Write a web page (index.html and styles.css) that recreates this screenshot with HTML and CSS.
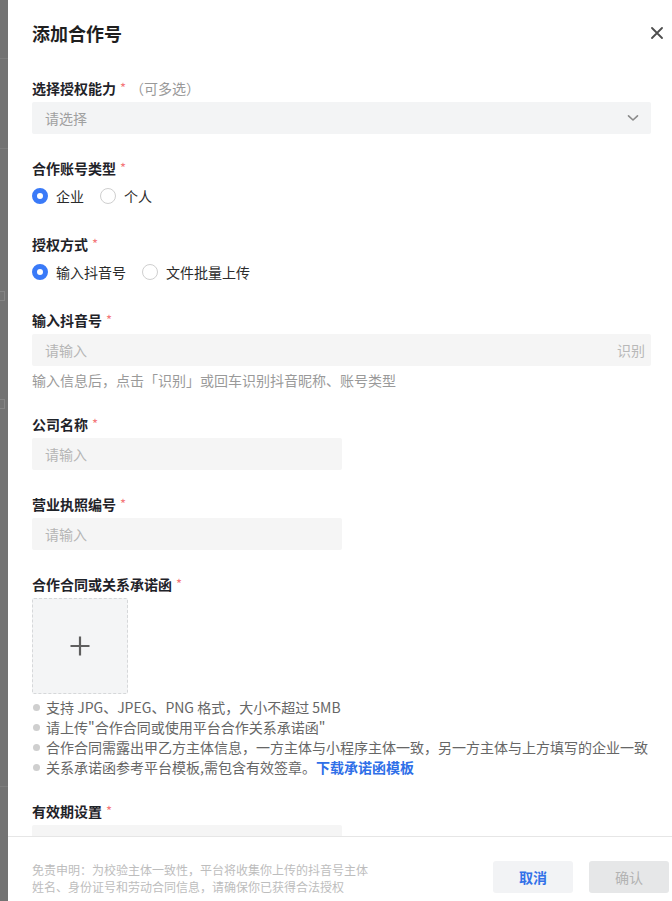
FILE: index.html
```html
<!DOCTYPE html>
<html lang="zh">
<head>
<meta charset="utf-8">
<title>添加合作号</title>
<link rel="stylesheet" href="styles.css">
</head>
<body>
<div class="page">
  <div class="backdrop">
    <span class="bd-line l1"></span>
    <span class="bd-line l2"></span>
    <span class="bd-mark m1"></span>
    <span class="bd-mark m2"></span>
    <span class="bd-line l3"></span>
  </div>
  <div class="drawer">
    <div class="body">
      <div class="header">
        <h1 class="title">添加合作号</h1>
        <svg class="close" width="12" height="12" viewBox="0 0 12 12"><path d="M1 1L11 11M11 1L1 11" stroke="#4e4e4e" stroke-width="1.8" stroke-linecap="round"/></svg>
      </div>

      <div class="item">
        <div class="label">选择授权能力<span class="req">*</span><span class="hint">（可多选）</span></div>
        <div class="field select">
          <span class="ph">请选择</span>
          <svg class="chev" width="12" height="8" viewBox="0 0 12 8"><path d="M1.5 1.8L6 6L10.5 1.8" fill="none" stroke="#8a8a8a" stroke-width="1.6" stroke-linecap="round" stroke-linejoin="round"/></svg>
        </div>
      </div>

      <div class="item">
        <div class="label">合作账号类型<span class="req">*</span></div>
        <div class="radios">
          <span class="radio on"></span><span class="rtext">企业</span>
          <span class="radio"></span><span class="rtext">个人</span>
        </div>
      </div>

      <div class="item">
        <div class="label">授权方式<span class="req">*</span></div>
        <div class="radios">
          <span class="radio on"></span><span class="rtext">输入抖音号</span>
          <span class="radio"></span><span class="rtext">文件批量上传</span>
        </div>
      </div>

      <div class="item">
        <div class="label">输入抖音号<span class="req">*</span></div>
        <div class="field">
          <span class="ph">请输入</span>
          <span class="suffix">识别</span>
        </div>
        <div class="help">输入信息后，点击「识别」或回车识别抖音昵称、账号类型</div>
      </div>

      <div class="item">
        <div class="label">公司名称<span class="req">*</span></div>
        <div class="field short"><span class="ph">请输入</span></div>
      </div>

      <div class="item">
        <div class="label">营业执照编号<span class="req">*</span></div>
        <div class="field short"><span class="ph">请输入</span></div>
      </div>

      <div class="item">
        <div class="label">合作合同或关系承诺函<span class="req">*</span></div>
        <div class="upload">
          <svg width="22" height="22" viewBox="0 0 22 22"><path d="M11 1.5V20.5M1.5 11H20.5" stroke="#5f5f5f" stroke-width="2.2"/></svg>
        </div>
        <ul class="tips">
          <li>支持 JPG、JPEG、PNG 格式，大小不超过 5MB</li>
          <li>请上传"合作合同或使用平台合作关系承诺函"</li>
          <li>合作合同需露出甲乙方主体信息，一方主体与小程序主体一致，另一方主体与上方填写的企业一致</li>
          <li>关系承诺函参考平台模板,需包含有效签章。<a class="link">下载承诺函模板</a></li>
        </ul>
      </div>

      <div class="item">
        <div class="label">有效期设置<span class="req">*</span></div>
        <div class="field short"></div>
      </div>
    </div>

    <div class="footer">
      <p class="notice">免责申明：为校验主体一致性，平台将收集你上传的抖音号主体姓名、身份证号和劳动合同信息，请确保你已获得合法授权</p>
      <div class="actions">
        <button class="btn cancel">取消</button>
        <button class="btn ok">确认</button>
      </div>
    </div>
  </div>
</div>
</body>
</html>
```

FILE: styles.css
```css
* { box-sizing: border-box; }
html, body {
  margin: 0;
  padding: 0;
  width: 672px;
  height: 901px;
  overflow: hidden;
  background: #fff;
  font-family: "Noto Sans CJK SC", "Noto Sans", sans-serif;
  color: #1f2329;
}
.page {
  display: flex;
  width: 672px;
  height: 901px;
}
.backdrop {
  position: relative;
  width: 8px;
  flex: none;
  background: #737373;
  overflow: hidden;
}
.bd-line {
  position: absolute;
  left: 0;
  width: 8px;
  height: 1px;
  background: #7e7e7e;
}
.bd-line.l1 { top: 58px; }
.bd-line.l2 { top: 148px; }
.bd-line.l3 { top: 786px; }
.bd-mark {
  position: absolute;
  left: 0;
  width: 5px;
  height: 10px;
  border: 1px solid #858585;
  border-left: none;
}
.bd-mark.m1 { top: 291px; }
.bd-mark.m2 { top: 399px; }

.drawer {
  flex: 1;
  display: flex;
  flex-direction: column;
  background: #fff;
  min-width: 0;
}
.body {
  flex: 1;
  overflow: hidden;
  padding: 22px 21px 0 24px;
}
.header {
  display: flex;
  align-items: center;
  justify-content: space-between;
  height: 22px;
  margin-bottom: 34px;
}
.title {
  margin: 0;
  font-size: 18px;
  line-height: 22px;
  font-weight: 700;
  color: #1f1f1f;
}
.close {
  margin-right: -12px;
}
.item {
  margin-bottom: 24px;
}
.label {
  font-size: 14px;
  line-height: 20px;
  font-weight: 600;
  color: #1f2329;
  margin-bottom: 4px;
  display: flex;
  align-items: center;
}
.req {
  color: #f4777a;
  font-weight: 400;
  margin-left: 4px;
  font-size: 13px;
}
.hint {
  color: #999;
  font-weight: 400;
  margin-left: 4px;
}
.field {
  height: 32px;
  background: #f5f5f5;
  border-radius: 2px;
  display: flex;
  align-items: center;
  justify-content: space-between;
  padding: 0 6px 0 13px;
  font-size: 14px;
}
.field.select {
  background: #f3f4f5;
  padding-right: 12px;
}
.field.short {
  width: 310px;
}
.ph {
  color: #b5b5b5;
}
.field.select .ph { color: #a0a0a0; }
.suffix {
  color: #b8b8b8;
}
.help {
  margin-top: 4px;
  font-size: 14px;
  line-height: 20px;
  color: #9a9a9a;
}
.radios {
  display: flex;
  align-items: center;
  height: 28px;
  font-size: 14px;
  color: #2b2b2b;
}
.radio {
  width: 16px;
  height: 16px;
  border-radius: 50%;
  border: 1px solid #cfcfcf;
  background: #fff;
  flex: none;
}
.radio.on {
  border: 5px solid #3a7af8;
}
.rtext {
  margin-left: 8px;
  margin-right: 16px;
}
.upload {
  width: 96px;
  height: 96px;
  border: 1px dashed #d6d8da;
  background: #f4f5f6;
  border-radius: 2px;
  display: flex;
  align-items: center;
  justify-content: center;
}
.tips {
  list-style: none;
  margin: 3px 0 0;
  padding: 0;
  font-size: 14px;
  line-height: 20px;
  color: #666;
}
.tips li {
  position: relative;
  padding-left: 14px;
  white-space: nowrap;
}
.tips li::before {
  content: "";
  position: absolute;
  left: 1px;
  top: 7px;
  width: 7px;
  height: 7px;
  border-radius: 50%;
  background: #cfcfcf;
}
.link {
  color: #2f6fe8;
  font-weight: 700;
}
.footer {
  flex: none;
  height: 65px;
  border-top: 1px solid #e6e6e6;
  display: flex;
  justify-content: space-between;
  align-items: flex-start;
  padding: 24px 3px 0 24px;
}
.notice {
  margin: 0;
  width: 340px;
  font-size: 12px;
  line-height: 17px;
  color: #bdbdbd;
}
.actions {
  display: flex;
  gap: 16px;
}
.btn {
  width: 80px;
  height: 32px;
  border: none;
  border-radius: 3px;
  font-family: inherit;
  font-size: 14px;
  padding: 0;
}
.btn.cancel {
  background: #f2f3f5;
  color: #3371e8;
  font-weight: 600;
}
.btn.ok {
  background: #e6e7e8;
  color: #b3b3b3;
}
```
